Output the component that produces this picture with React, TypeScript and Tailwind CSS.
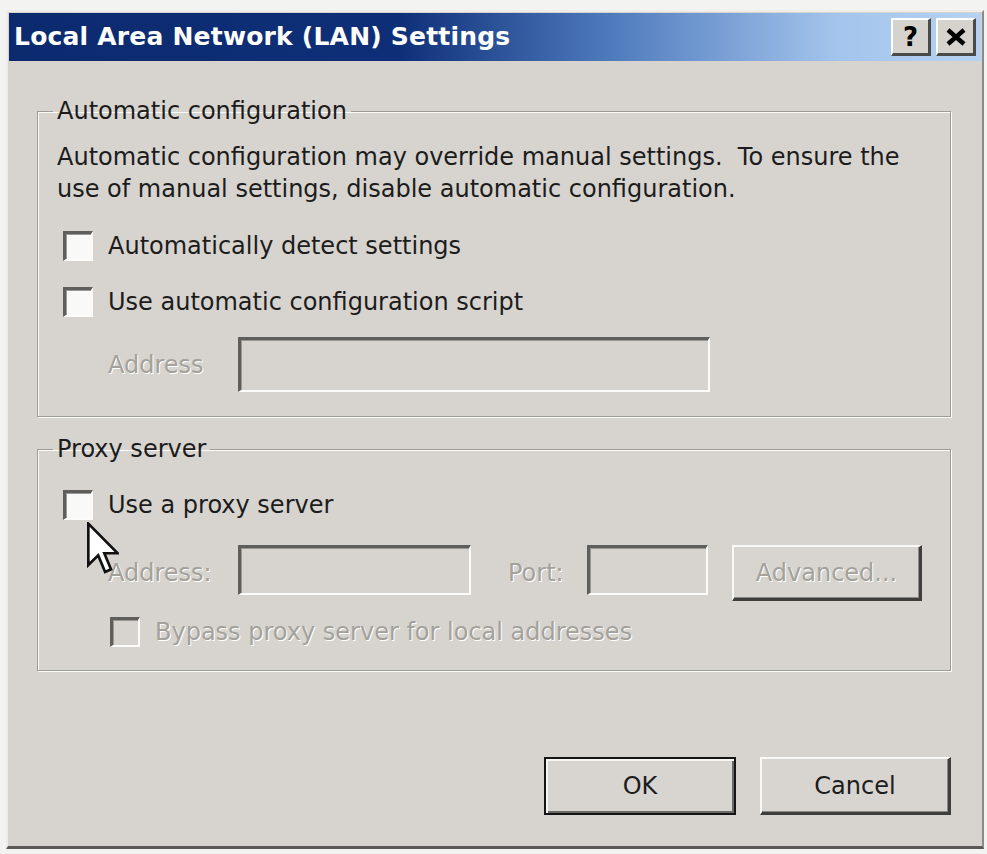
import React from "react";

const font = "font-['DejaVu_Sans','Liberation_Sans',sans-serif]";
const disabledText =
  "text-[#a4a19b] [text-shadow:1px_1px_0_#ffffff]";
const sunken =
  "border-t-[3px] border-l-[3px] border-r-2 border-b-2 border-t-[#5e5e5c] border-l-[#5e5e5c] border-r-[#fbfbf9] border-b-[#fbfbf9] shadow-[inset_1px_1px_0_#9a9893]";

function Checkbox({ label, disabled }: { label: string; disabled?: boolean }) {
  return (
    <label className="flex items-center gap-[15px] h-[30px]">
      <span
        className={`shrink-0 w-[30px] h-[30px] ${sunken} ${disabled ? "bg-[#d7d4cf]" : "bg-[#f9f9f7]"}`}
      />
      <span className={disabled ? disabledText : "text-[#1c1c1c]"}>{label}</span>
    </label>
  );
}

function Field({ width }: { width: string }) {
  return <div className={`${width} h-[50px] bg-[#d7d4cf] ${sunken}`} />;
}

function CaptionButton({ children }: { children: React.ReactNode }) {
  return (
    <button className="w-[40px] h-[38px] flex items-center justify-center bg-[#d6d3ce] border-t-2 border-l-2 border-r-[3px] border-b-[3px] border-t-white border-l-white border-r-[#4a4a48] border-b-[#4a4a48] text-black font-bold text-[26px] leading-none">
      {children}
    </button>
  );
}

function PushButton({
  label,
  width,
  isDefault,
  disabled,
  height = "h-[58px]",
}: {
  label: string;
  width: string;
  isDefault?: boolean;
  disabled?: boolean;
  height?: string;
}) {
  return (
    <button
      className={`${width} ${height} flex items-center justify-center bg-[#d8d5d0] ${
        isDefault
          ? "border-2 border-[#151515] shadow-[inset_2px_2px_0_#f6f6f4,inset_-2px_-2px_0_#6b6a67]"
          : "border-t-2 border-l-2 border-r-[3px] border-b-[3px] border-t-[#f8f8f6] border-l-[#f8f8f6] border-r-[#3e3e3c] border-b-[#3e3e3c] shadow-[inset_-1px_-1px_0_#8c8a86]"
      } ${disabled ? disabledText : "text-[#1c1c1c]"}`}
    >
      {label}
    </button>
  );
}

function Group({
  title,
  className,
  children,
}: {
  title: string;
  className?: string;
  children: React.ReactNode;
}) {
  return (
    <fieldset
      className={`border border-[#9d9b96] shadow-[inset_1px_1px_0_#fbfbf9,1px_1px_0_#fbfbf9] pl-[19px] pr-[19px] ${className ?? ""}`}
    >
      <legend className="ml-[-4px] px-[4px] leading-[26px] text-[#1c1c1c]">
        {title}
      </legend>
      {children}
    </fieldset>
  );
}

export default function App() {
  return (
    <div className={`w-[987px] h-[854px] bg-[#f3f3f1] pt-[10px] pl-[6px] ${font} text-[24px]`}>
      <div className="relative w-[978px] h-[839px] bg-[#d7d4cf] border-t-2 border-l-2 border-r-2 border-b-[3px] border-t-[#eeede9] border-l-[#eeede9] border-r-[#8c8a86] border-b-[#5a5957] px-px pt-px">
        {/* title bar */}
        <div className="h-[48px] flex items-center justify-between pl-[5px] pr-[5px] bg-[linear-gradient(90deg,#0c2a6e_0%,#0e2f78_40%,#4f7bbd_62%,#a3c4ec_85%,#b6d2f2_100%)]">
          <span className="text-white font-bold text-[25px] tracking-[0.2px]">
            Local Area Network (LAN) Settings
          </span>
          <div className="flex gap-[5px]">
            <CaptionButton>?</CaptionButton>
            <CaptionButton>
              <svg width="20" height="18" viewBox="0 0 10 9">
                <path d="M1 1 L9 8 M9 1 L1 8" stroke="#000" strokeWidth="2.2" />
              </svg>
            </CaptionButton>
          </div>
        </div>

        <div className="pl-[28px] pr-[30px] pt-[37px]">
          <Group title="Automatic configuration" className="pb-[24px]">
            <p className="mt-[17px] leading-[32px] text-[#1c1c1c]">
              Automatic configuration may override manual settings.&nbsp; To ensure the use of manual settings, disable automatic configuration.
            </p>
            <div className="mt-[26px] pl-[6px] flex flex-col gap-[26px]">
              <Checkbox label="Automatically detect settings" />
              <Checkbox label="Use automatic configuration script" />
            </div>
            <div className="mt-[20px] pl-[51px] flex items-center">
              <span className={`w-[130px] ${disabledText}`}>Address</span>
              <div className={`w-[472px] h-[55px] bg-[#d7d4cf] ${sunken}`} />
            </div>
          </Group>

          <Group title="Proxy server" className="mt-[19px] pb-[23px]">
            <div className="mt-[28px] pl-[6px]">
              <Checkbox label="Use a proxy server" />
            </div>
            <div className="mt-[25px] pl-[51px] flex items-start h-[56px]">
              <span className={`w-[130px] leading-[56px] ${disabledText}`}>Address:</span>
              <Field width="w-[233px]" />
              <span className={`ml-[37px] w-[79px] leading-[56px] ${disabledText}`}>Port:</span>
              <Field width="w-[121px]" />
              <div className="ml-[24px]">
                <PushButton label="Advanced..." width="w-[190px]" height="h-[56px]" disabled />
              </div>
            </div>
            <div className="mt-[16px] pl-[53px]">
              <Checkbox label="Bypass proxy server for local addresses" disabled />
            </div>
          </Group>

          <div className="mt-[86px] flex justify-end gap-[24px] pr-0">
            <PushButton label="OK" width="w-[192px]" isDefault />
            <PushButton label="Cancel" width="w-[191px]" />
          </div>
        </div>

        {/* mouse pointer */}
        <svg
          className="absolute left-[79px] top-[510px]"
          width="32"
          height="54"
          viewBox="0 0 12 20"
        >
          <path
            d="M0.5 0.5 L0.5 16 L4.2 12.4 L6.8 18.6 L9 17.6 L6.5 11.6 L11.5 11.6 Z"
            fill="#ffffff"
            stroke="#111111"
            strokeWidth="1"
            strokeLinejoin="miter"
          />
        </svg>
      </div>
    </div>
  );
}
